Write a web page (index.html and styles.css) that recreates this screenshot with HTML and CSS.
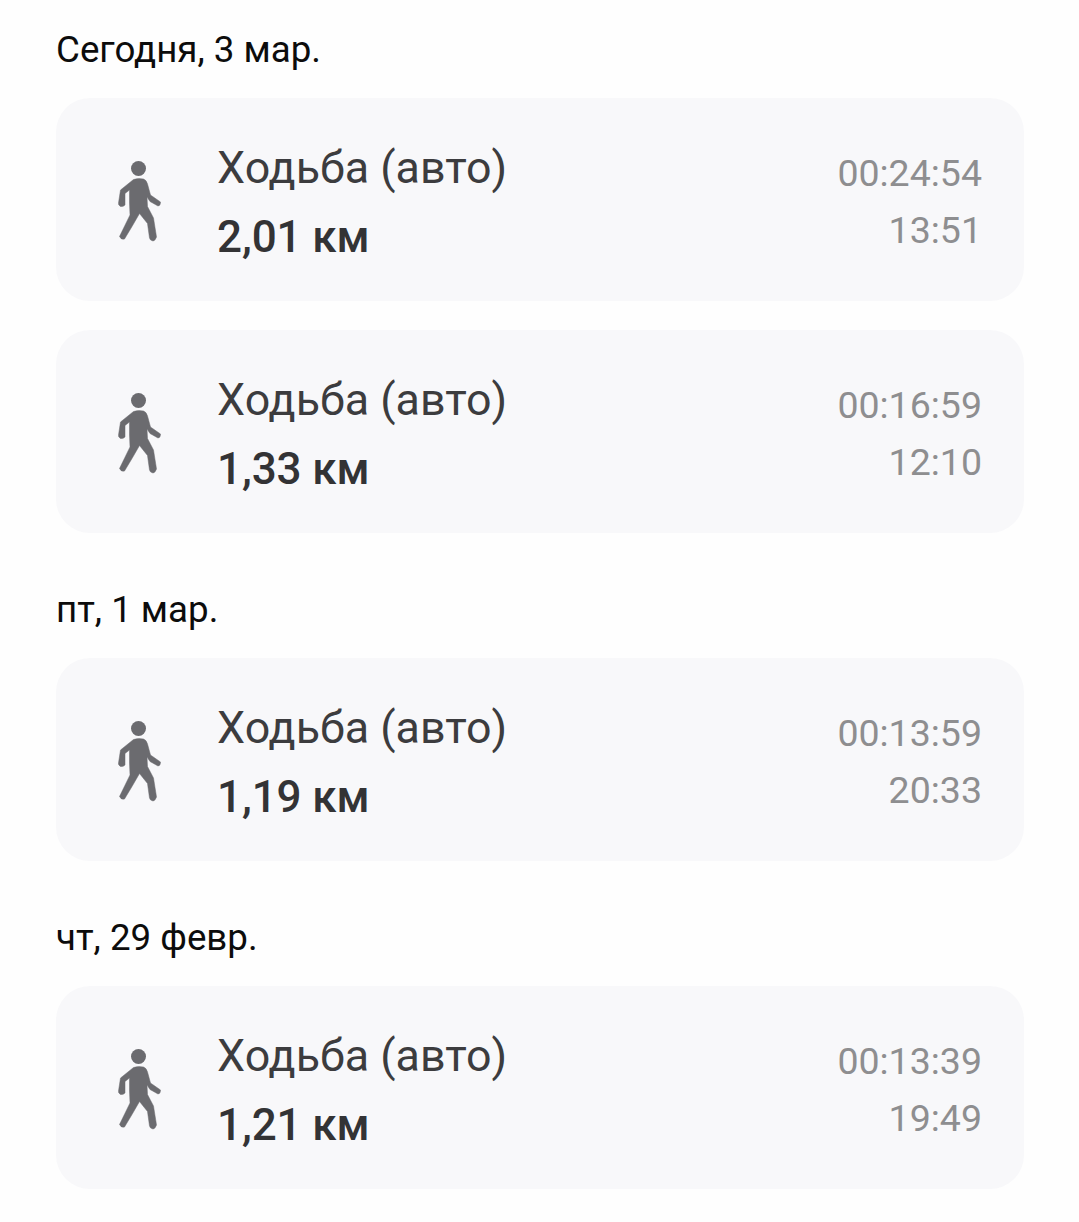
FILE: index.html
```html
<!DOCTYPE html>
<html lang="ru">
<head>
  <meta charset="UTF-8">
  <meta name="viewport" content="width=device-width, initial-scale=1.0">
  <title>Тренировки</title>
  <link rel="stylesheet" href="styles.css">
</head>
<body>

  <svg class="sprite" width="0" height="0">
    <symbol id="walker" viewBox="0 0 54 84">
      <circle cx="30.5" cy="8.5" r="7.5" fill="currentColor"/>
      <path d="M25.500 19.500 Q30 18 35.500 19 Q38.500 20 39.500 24 L42.500 35 L52.500 42 Q52.500 46 50 46 L42 41.500 L39 37 L39.500 46.500 L45.500 58 L48.500 77 Q47 81 45 81 Q42 80.500 41.500 78 L39.500 63.500 L31.500 53.500 L24 66.500 L16.500 79 Q13 80 11.500 76.500 L22 55 L21.500 43 L21.500 30 L17 33.500 L17 45 Q15 47 12.500 46.500 Q10 45 10.500 43 L12.500 30 Z" fill="currentColor" stroke="currentColor" stroke-width="0.500" stroke-linejoin="round"/>
    </symbol>
  </svg>

  <section class="day">
    <h2 class="day-title">Сегодня, 3 мар.</h2>
    <div class="card">
      <svg class="walk-icon"><use href="#walker"/></svg>
      <div class="info">
        <div class="name">Ходьба (авто)</div>
        <div class="dist">2,01 км</div>
      </div>
      <div class="times">
        <div class="duration">00:24:54</div>
        <div class="clock">13:51</div>
      </div>
    </div>
    <div class="card">
      <svg class="walk-icon"><use href="#walker"/></svg>
      <div class="info">
        <div class="name">Ходьба (авто)</div>
        <div class="dist">1,33 км</div>
      </div>
      <div class="times">
        <div class="duration">00:16:59</div>
        <div class="clock">12:10</div>
      </div>
    </div>
  </section>

  <section class="day">
    <h2 class="day-title">пт, 1 мар.</h2>
    <div class="card">
      <svg class="walk-icon"><use href="#walker"/></svg>
      <div class="info">
        <div class="name">Ходьба (авто)</div>
        <div class="dist">1,19 км</div>
      </div>
      <div class="times">
        <div class="duration">00:13:59</div>
        <div class="clock">20:33</div>
      </div>
    </div>
  </section>

  <section class="day">
    <h2 class="day-title">чт, 29 февр.</h2>
    <div class="card">
      <svg class="walk-icon"><use href="#walker"/></svg>
      <div class="info">
        <div class="name">Ходьба (авто)</div>
        <div class="dist">1,21 км</div>
      </div>
      <div class="times">
        <div class="duration">00:13:39</div>
        <div class="clock">19:49</div>
      </div>
    </div>
  </section>

</body>
</html>
```

FILE: styles.css
```css
body {
  font-family: Roboto, sans-serif;
  background-color: #fefefe;
  margin: 0;
  padding: 29px 55px 0 56px;
}

.sprite {
  display: block;
  height: 0;
}

.day {
  display: flex;
  flex-direction: column;
  gap: 29px;
  margin-bottom: 56px;
}

.day-title {
  font-size: 36.7px;
  font-weight: 400;
  line-height: 42px;
  color: #0c0c0c;
  margin: 0 0 -2px;
}

.card {
  box-sizing: border-box;
  display: flex;
  align-items: center;
  height: 203px;
  padding: 5px 42px 0 52px;
  background-color: #f8f8fa;
  border-radius: 34px;
}

.walk-icon {
  width: 54px;
  height: 84px;
  color: #6b6b6f;
  flex-shrink: 0;
  margin-right: 56px;
  filter: blur(0.6px);
}

.info {
  flex: 1;
  display: flex;
  flex-direction: column;
  gap: 17px;
}

.name {
  font-size: 44.8px;
  line-height: 52px;
  margin-left: -1px;
  color: #3c3c3e;
}

.dist {
  font-size: 44px;
  line-height: 52px;
  font-weight: 500;
  letter-spacing: -0.1px;
  margin-left: -1px;
  color: #333335;
}

.times {
  display: flex;
  flex-direction: column;
  align-items: flex-end;
  gap: 13px;
  margin-bottom: 2px;
  font-size: 37.5px;
  line-height: 44px;
  color: #8e8e90;
}
```
